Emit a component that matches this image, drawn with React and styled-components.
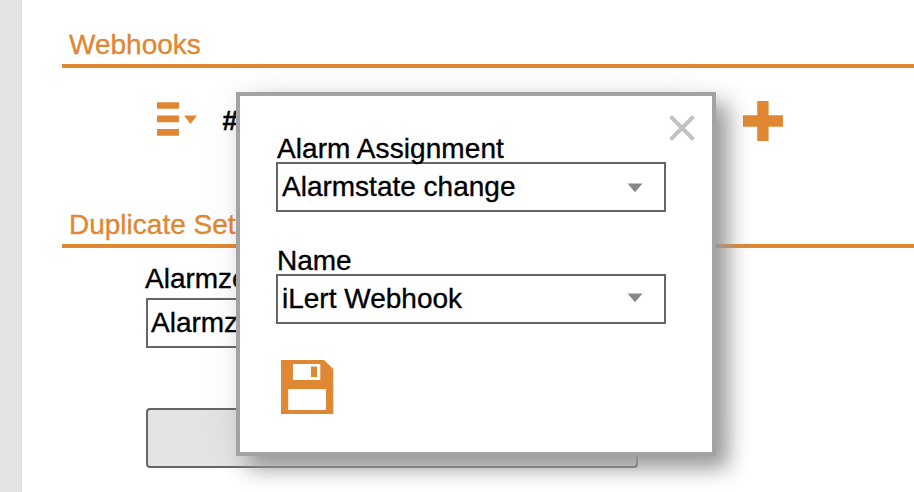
import React from "react";
import styled, { createGlobalStyle } from "styled-components";

const orange = "#e08733";
const line = "#666666";

const GlobalStyle = createGlobalStyle`
  * { box-sizing: border-box; }
  html, body { margin: 0; background: #fff; }
  body { overflow: hidden; }
`;

const Page = styled.div`
  position: relative;
  display: flex;
  width: 914px;
  height: 492px;
  overflow: hidden;
  background: #fff;
  color: #000;
  font-family: "Liberation Sans", Arial, Helvetica, sans-serif;
  font-size: 28px;
  line-height: 32px;
  white-space: nowrap;
  -webkit-text-stroke: 0.35px currentColor;
`;

const Gutter = styled.div`
  flex: 0 0 22px;
  background: #e3e3e3;
`;

const Content = styled.main`
  flex: 1;
  min-width: 0;
  padding: 28px 0 0 40px;
`;

const SectionTitle = styled.h2`
  height: 40px;
  margin: 0;
  padding: 1px 0 0 7px;
  border-bottom: 4px solid ${orange};
  color: ${orange};
  font-size: 28px;
  font-weight: 400;
`;

const WebhookRow = styled.div`
  display: flex;
  align-items: flex-start;
  height: 140px;
  padding: 32px 0 0 94px;
`;

const MenuIcon = styled.svg`
  flex: none;
  width: 42px;
  height: 38px;
`;

const Hash = styled.span`
  width: 520px;
  margin: 5px 0 0 24px;
  font-style: italic;
  font-weight: 700;
`;

const PlusIcon = styled.svg`
  flex: none;
  width: 42px;
  height: 42px;
`;

const Form = styled.div`
  width: 492px;
  margin: 14px 0 0 84px;
`;

const FormLabel = styled.div`
  height: 36px;
  padding-top: 1px;
  margin-left: -1px;
`;

const Select = styled.div`
  display: flex;
  justify-content: space-between;
  height: 50px;
  padding: 0 21px 0 ${(p) => p.$inset || "4px"};
  border: 2px solid ${line};
  background: #fff;
  line-height: 45px;
`;

const Arrow = styled.svg`
  width: 16px;
  height: 10px;
  margin-top: ${(p) => p.$top};
`;

const SubmitButton = styled.button`
  display: block;
  width: 492px;
  height: 60px;
  margin-top: 60px;
  border: 2px solid ${line};
  border-radius: 4px;
  background: #e3e3e3;
`;

const Dialog = styled.div`
  position: absolute;
  left: 236px;
  top: 92px;
  width: 480px;
  height: 364px;
  padding: 36px 46px 0 36px;
  border: 4px solid #a3a3a3;
  background: #fff;
  box-shadow: 12px 12px 20px #999, 0 0 40px rgba(0, 0, 0, 0.06);
`;

const Close = styled.svg`
  position: absolute;
  right: 16px;
  top: 18px;
  width: 28px;
  height: 28px;
`;

const Field = styled.div`
  height: 112px;
`;

const FieldLabel = styled.div`
  height: 30px;
  padding: 1px 0 0 1px;
  letter-spacing: ${(p) => p.$tracking || "0"};
`;

const SaveIcon = styled.svg`
  display: block;
  width: 54px;
  height: 55px;
  margin: 3px 0 0 4px;
`;

function DropArrow({ top }) {
  return (
    <Arrow $top={top} viewBox="0 0 16 10">
      <path d="M.5.5h15L8 9.3z" fill="#888" />
    </Arrow>
  );
}

export default function App() {
  return (
    <Page>
      <GlobalStyle />
      <Gutter />
      <Content>
        <SectionTitle>Webhooks</SectionTitle>
        <WebhookRow>
          <MenuIcon viewBox="0 0 42 38" fill={orange}>
            <path d="M1 2.2h22v6.6H1zM1 15.6h22v6.6H1zM1 29.1h22v6.6H1zM28 15.4h13L34.5 24z" />
          </MenuIcon>
          <Hash>#</Hash>
          <PlusIcon viewBox="0 0 42 42" fill={orange}>
            <path d="M15.2 1h11.4v14.3H41v11.4H26.6V41H15.2V26.7H1V15.3h14.2z" />
          </PlusIcon>
        </WebhookRow>
        <SectionTitle>Duplicate Set</SectionTitle>
        <Form>
          <FormLabel>Alarmze</FormLabel>
          <Select $inset="3px">Alarmz</Select>
          <SubmitButton aria-label="Duplicate" />
        </Form>
      </Content>
      <Dialog role="dialog">
        <Close viewBox="0 0 28 28" stroke="#c2c2c2" strokeWidth="4">
          <path d="M2.5 2.5l23 23M25.5 2.5l-23 23" />
        </Close>
        <Field>
          <FieldLabel $tracking="0.08px">Alarm Assignment</FieldLabel>
          <Select>
            Alarmstate change
            <DropArrow top="19px" />
          </Select>
        </Field>
        <Field>
          <FieldLabel>Name</FieldLabel>
          <Select>
            iLert Webhook
            <DropArrow top="17px" />
          </Select>
        </Field>
        <SaveIcon viewBox="0 0 54 55">
          <path
            fillRule="evenodd"
            fill={orange}
            d="M1 1h43l9.3 9v45H1zM13 5v16h27.3V5zM31 7.5h6v10.6h-6zM8.2 30v21H46V30z"
          />
        </SaveIcon>
      </Dialog>
    </Page>
  );
}
